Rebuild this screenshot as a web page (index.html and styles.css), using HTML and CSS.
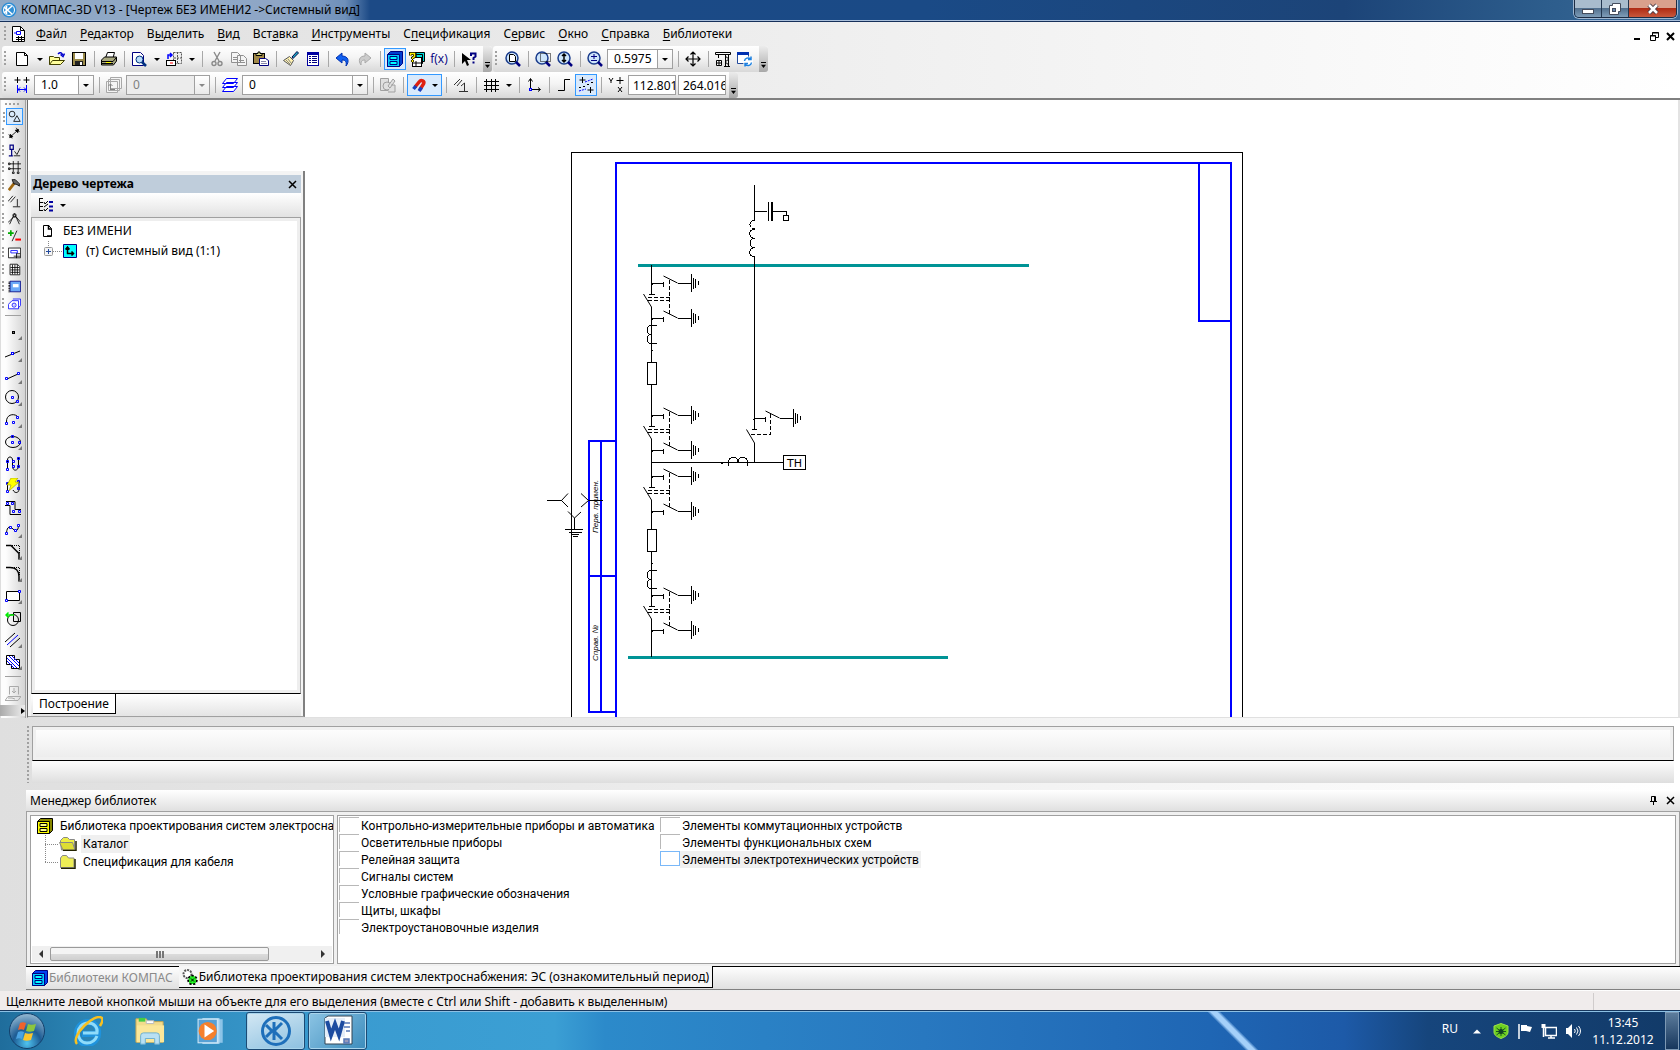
FILE: index.html
```html
<!DOCTYPE html>
<html lang="ru">
<head>
<meta charset="utf-8">
<title>КОМПАС-3D V13</title>
<link rel="stylesheet" href="styles.css">
</head>
<body>
<header class="titlebar">
  <svg class="applogo" viewBox="0 0 16 16"><circle cx="8" cy="8" r="7.500" fill="#2f8fd6"/><circle cx="8" cy="8" r="5.500" fill="none" stroke="#fff"/><path d="M5.500 4v8M11 4L6.500 8l4.500 4M3 5l3 3-3 3" stroke="#fff" stroke-width="1.500" fill="none"/></svg>
  <h1 class="caption">КОМПАС-3D V13 - [Чертеж БЕЗ ИМЕНИ2 -&gt;Системный вид]</h1>
  <div class="winbtns">
    <button class="wb" aria-label="Свернуть"><svg viewBox="0 0 12 12"><rect x=".5" y="6.500" width="11" height="4" fill="#fff" stroke="#444c5c"/></svg></button>
    <button class="wb" aria-label="Развернуть"><svg viewBox="0 0 12 12"><path d="M3.500 .5h8v8h-2v3h-9v-9h3z" fill="#fff" stroke="#444c5c"/><rect x="3.500" y="5.500" width="3" height="3" fill="#6a8ab0" stroke="#444c5c"/></svg></button>
    <button class="wb close" aria-label="Закрыть"><svg viewBox="0 0 12 12"><path d="M2 2l8 8M10 2l-8 8" stroke="#4a3a44" stroke-width="4.500"/><path d="M2 2l8 8M10 2l-8 8" stroke="#fff" stroke-width="2.500"/></svg></button>
  </div>
</header>

<div class="bars">
  <nav class="menubar">
    <i class="grip"></i>
    <svg class="docicon" viewBox="0 0 14 16"><path d="M1.500 .5h8l4 4v11h-12z" fill="#fff" stroke="#000"/><path d="M9.500 .5v4h4" fill="none" stroke="#000"/><path d="M3 7h2M5.500 5.500v3h4v-3z" stroke="#00f" fill="none"/><path d="M5 11.500h8M5 13.500h8M7.500 10v5M10.500 10v5" stroke="#000"/></svg>
    <a href="#"><u>Ф</u>айл</a><a href="#"><u>Р</u>едактор</a><a href="#">В<u>ы</u>делить</a><a href="#"><u>В</u>ид</a><a href="#">Вст<u>а</u>вка</a><a href="#"><u>И</u>нструменты</a><a href="#">С<u>п</u>ецификация</a><a href="#">С<u>е</u>рвис</a><a href="#"><u>О</u>кно</a><a href="#"><u>С</u>правка</a><a href="#"><u>Б</u>иблиотеки</a>
    <div class="mdi">
      <button aria-label="Свернуть окно"><svg viewBox="0 0 9 9"><path d="M0 7h6" stroke="#000" stroke-width="2"/></svg></button>
      <button aria-label="Восстановить окно"><svg viewBox="0 0 9 9"><path d="M2.500 3V.5h6v5H6M2 1h7M.5 3.500h5v5h-5zM0 4h6" fill="none" stroke="#000"/></svg></button>
      <button aria-label="Закрыть окно"><svg viewBox="0 0 9 9"><path d="M1 1l7 7M8 1L1 8" stroke="#000" stroke-width="2"/></svg></button>
    </div>
  </nav>

  <div class="barrow">
    <div class="toolbar">
      <i class="grip"></i>
      <button class="b" aria-label="Новый"><svg viewBox="0 0 16 16"><path d="M2.500 1.500h8l3 3v10h-11z" fill="#fff" stroke="#000"/><path d="M10.500 1.500v3h3" fill="none" stroke="#000"/></svg></button>
      <button class="dd" aria-label="Список"></button>
      <button class="b" aria-label="Открыть"><svg viewBox="0 0 16 16"><path d="M.5 13.500v-8h4l1 1h5v3M.5 13.500l3-4h12l-4 4z" fill="#ffff9c" stroke="#404000"/><path d="M9 3c2-2 4-1.500 4.500 1M11.500 3.500l2.500 2 1.500-3" fill="none" stroke="#00c" stroke-width="1.500"/></svg></button>
      <button class="b" aria-label="Сохранить"><svg viewBox="0 0 16 16"><rect x="1.500" y="1.500" width="13" height="13" fill="#9a8a4a" stroke="#000"/><rect x="4" y="2" width="8" height="6" fill="#fff"/><rect x="4" y="10" width="8" height="4" fill="#222"/><rect x="9" y="11" width="2" height="3" fill="#fff"/></svg></button>
      <i class="sep"></i>
      <button class="b" aria-label="Печать"><svg viewBox="0 0 16 16"><path d="M4.500 7l2-5.500h7L12 7" fill="#fff" stroke="#000"/><path d="M.5 9l3-3h12v4l-3 4h-12z" fill="#a8a880" stroke="#000"/><path d="M1 10.500h11l3-3.500M1 12.500h11" stroke="#000" fill="none"/><path d="M5 11.500h5" stroke="#ff0"/></svg></button>
      <i class="sep"></i>
      <button class="b" aria-label="Просмотр"><svg viewBox="0 0 16 16"><path d="M1.500 1.500h8l3 3v10h-11z" fill="#fff" stroke="#000080"/><circle cx="8.500" cy="8.500" r="3.500" fill="#b8dcf8" stroke="#003080"/><path d="M11 11l4 4" stroke="#003080" stroke-width="2.500"/></svg></button>
      <button class="dd" aria-label="Список"></button>
      <button class="b" aria-label="Вид"><svg viewBox="0 0 16 16"><path d="M7.500 1.500h8v11h-8zM11.500 1v12M8 7h7" fill="#eee" stroke="#555" stroke-dasharray="2 1"/><rect x=".5" y="9.500" width="9" height="5" fill="#fff" stroke="#000"/><path d="M4 12h3" stroke="#f00"/><path d="M2 8V4h3M4 2l2 2-2 2" stroke="#00f" stroke-width="1.500" fill="none"/></svg></button>
      <button class="dd" aria-label="Список"></button>
      <i class="sep"></i>
      <button class="b" aria-label="Вырезать"><svg viewBox="0 0 16 16" fill="none" stroke="#8a8a8a" stroke-width="1.400"><path d="M5 1l5 9M11 1L6 10"/><circle cx="5" cy="12.500" r="2"/><circle cx="11" cy="12.500" r="2"/></svg></button>
      <button class="b" aria-label="Копировать"><svg viewBox="0 0 16 16" fill="#f4f4f4" stroke="#909090"><path d="M.5 1.500h6l3 3v7h-9zM6.500 4.500h6l3 3v7h-9z"/><path d="M8 9.500h5M8 11.500h6M2 6.500h4M2 8.500h4"/></svg></button>
      <button class="b" aria-label="Вставить"><svg viewBox="0 0 16 16"><rect x=".5" y="2.500" width="11" height="10" fill="#a08848" stroke="#000"/><path d="M3 4.500h6v-2H7V1H5v1.500H3z" fill="#dd8" stroke="#000"/><path d="M6.500 7.500h6l3 2v5h-9z" fill="#fff" stroke="#000080"/><path d="M8 10.500h5M8 12.500h6" stroke="#88a"/></svg></button>
      <i class="sep"></i>
      <button class="b" aria-label="Копировать свойства"><svg viewBox="0 0 16 16"><path d="M9 6l5-5.500 1.500 1.500L10 7.500z" fill="#18b0c8" stroke="#004"/><path d="M6.500 5.500l4 4-3 5-7-5z" fill="#fff2b0" stroke="#555"/><path d="M3 9l4 4M5 8l3 4" stroke="#888"/></svg></button>
      <button class="b" aria-label="Свойства"><svg viewBox="0 0 16 16"><rect x="2" y="1" width="12" height="14" fill="#0000a0"/><rect x="3" y="4" width="10" height="10" fill="#fff"/><path d="M4 5.500h2M4 7.500h2M4 9.500h2M4 11.500h2M7 5.500h5M7 7.500h5M7 9.500h5M7 11.500h5" stroke="#000080"/></svg></button>
      <i class="sep"></i>
      <button class="b" aria-label="Отменить"><svg viewBox="0 0 16 16"><path d="M1 7l6-5v3c6 0 8 5 4 10 1-5-1-6-4-6v3z" fill="#1060f0" stroke="#0030b0"/></svg></button>
      <button class="b" aria-label="Повторить"><svg viewBox="0 0 16 16"><path d="M14 7L8 2v3C2 5 1 10 4 14c0-4 1-5 4-5v3z" fill="#ccc" stroke="#aaa"/></svg></button>
      <i class="sep"></i>
      <button class="b on" aria-label="Менеджер библиотек"><svg viewBox="0 0 16 16"><path d="M.5 3.500l3-3h12v12l-3 3h-12z" fill="#0040d0" stroke="#000080"/><path d="M.5 3.500h12v12h-12z" fill="#0cf" stroke="#000080"/><path d="M3 5.500h7v3H3zM3 10.500h7v3H3z" fill="#0ff" stroke="#000080"/></svg></button>
      <button class="b" aria-label="Справочник"><svg viewBox="0 0 16 16"><path d="M7 1.500h8.500v9h-8zM5 3.500h8.500v9H5z" fill="#0dd" stroke="#000"/><rect x="3.500" y="6.500" width="9" height="9" fill="#fff" stroke="#000"/><path d="M4 12h8M7 10v5" stroke="#000"/><path d="M1.500 4.500V2.500h4v3l-2 1.500v1M3.500 9v2" stroke="#000" stroke-width="3" fill="none"/><path d="M1.500 4.500V2.500h4v3l-2 1.500v1M3.500 9v2" stroke="#fe0" stroke-width="1.500" fill="none"/></svg></button>
      <button class="b fx">f(x)</button>
      <i class="sep"></i>
      <button class="b" aria-label="Справка"><svg viewBox="0 0 16 16"><path d="M1 2v11l3-3 2 5 2-1-2-5h4z" fill="#000"/><path d="M10 5V2.500h4.500v3L12.500 7v2M12.500 10.500v2" stroke="#000080" stroke-width="2" fill="none"/></svg></button>
      <button class="over" aria-label="Ещё"></button>
    </div>
    <div class="toolbar">
      <i class="grip"></i>
      <button class="b" aria-label="Лист"><svg viewBox="0 0 16 16"><circle cx="7" cy="7" r="6" fill="#cfe6fb" stroke="#1a3c8c" stroke-width="1.500"/><path d="M11 11l4 4" stroke="#000080" stroke-width="2.500"/><path d="M4.500 3.500h4l2 2v5h-6z" fill="#fff" stroke="#000"/></svg></button>
      <i class="sep"></i>
      <button class="b" aria-label="Рамка"><svg viewBox="0 0 16 16"><circle cx="7" cy="7" r="6" fill="#cfe6fb" stroke="#1a3c8c" stroke-width="1.500"/><path d="M11 11l4 4" stroke="#000080" stroke-width="2.500"/><path d="M5.500 2.500h10v8h-10z" fill="none" stroke="#000" stroke-dasharray="1 1"/></svg></button>
      <button class="b" aria-label="Масштаб"><svg viewBox="0 0 16 16"><circle cx="7" cy="7" r="6" fill="#cfe6fb" stroke="#1a3c8c" stroke-width="1.500"/><path d="M11 11l4 4" stroke="#000080" stroke-width="2.500"/><path d="M7 3v8M5 5l2-2 2 2M5 9l2 2 2-2" fill="none" stroke="#000" stroke-width="1.500"/></svg></button>
      <i class="sep"></i>
      <button class="b" aria-label="Крупнее"><svg viewBox="0 0 16 16"><circle cx="7" cy="7" r="6" fill="#cfe6fb" stroke="#1a3c8c" stroke-width="1.500"/><path d="M11 11l4 4" stroke="#000080" stroke-width="2.500"/><path d="M7 3v5M4 5.500h6M4 9.500h6" stroke="#000080"/></svg></button>
      <div class="combo zoomc"><input aria-label="Текущий масштаб" value="0.5975"><button class="dd" aria-label="Список"></button></div>
      <i class="sep"></i>
      <button class="b" aria-label="Сдвинуть"><svg viewBox="0 0 16 16"><path d="M8 1v14M1 8h14M5.500 3.500L8 1l2.500 2.500M5.500 12.500L8 15l2.500-2.500M3.500 5.500L1 8l2.500 2.500M12.500 5.500L15 8l-2.500 2.500" fill="none" stroke="#000" stroke-width="1.200"/></svg></button>
      <i class="sep"></i>
      <button class="b" aria-label="Перестроить"><svg viewBox="0 0 16 16"><path d="M.5 1.500h15v2H.5zM3.500 4v3" fill="none" stroke="#000"/><path d="M1.500 9.500h5v5h-5zM4 9v6M1 12h6" fill="#fff" stroke="#000"/><path d="M10.500 3v12M13.500 3v12M10 5l4 3-4 3 4 3M9 15.500h6" fill="none" stroke="#000"/></svg></button>
      <button class="b" aria-label="Обновить"><svg viewBox="0 0 16 16"><path d="M.5 1.500h11v11H.5z" fill="#fff" stroke="#224a9c"/><path d="M0 2.500h12" stroke="#0030b0" stroke-width="3"/><circle cx="11" cy="10.500" r="5" fill="#fff"/><path d="M7.500 10a3.500 3.500 0 0 1 6-2M14.500 11.500a3.500 3.500 0 0 1-6 2M14 5.500v3h-3M8 15.500v-3h3" fill="none" stroke="#1c80e0" stroke-width="1.500"/></svg></button>
      <button class="over" aria-label="Ещё"></button>
    </div>
  </div>

  <div class="barrow">
    <div class="toolbar">
      <i class="grip"></i>
      <button class="b" aria-label="Шаг курсора"><svg viewBox="0 0 16 16"><path d="M3.500 0v6M.5 3h6M12.500 0v6M9.500 3h6" stroke="#000"/><path d="M3.500 8v8M12.500 8v8M4 12.500h8M6 10.500l-2 2 2 2M10 10.500l2 2-2 2" fill="none" stroke="#00f"/></svg></button>
      <div class="combo step"><input aria-label="Текущий шаг курсора" value="1.0"><button class="dd" aria-label="Список"></button></div>
      <i class="sep"></i>
      <button class="b" aria-label="Состояния видов"><svg viewBox="0 0 16 16" fill="#f4f4f4" stroke="#a8a8a8"><path d="M4.500 .5h11v11h-11zM2.500 2.500h11v11h-11zM.5 4.500h11v11H.5z"/><path d="M4.500 13V7M2.500 9l2-2 2 2M4 12.500h5" stroke="#808080" fill="none"/></svg></button>
      <div class="combo view off"><input aria-label="Текущий вид" value="0" disabled><button class="dd" aria-label="Список" disabled></button></div>
      <i class="sep"></i>
      <button class="b" aria-label="Слои"><svg viewBox="0 0 16 16" fill="#fff" stroke="#00f"><path d="M.5 14.500l4-5h11l-4 5zM.5 10.500l4-5h11l-4 5zM.5 6.500l4-5h11l-4 5z"/></svg></button>
      <div class="combo layer"><input aria-label="Текущий слой" value="0"><button class="dd" aria-label="Список"></button></div>
      <i class="sep"></i>
      <button class="b" aria-label="Редактор"><svg viewBox="0 0 16 16" fill="#e0e0e0" stroke="#a0a0a0"><path d="M.5 1.500h8v12h-8z"/><circle cx="7" cy="9" r="4"/><path d="M8 9l5-7 2 2-5 7zM11 8h4v7H8"/></svg></button>
      <i class="sep"></i>
      <button class="b on magnet" aria-label="Привязки"><svg viewBox="0 0 16 16"><path d="M4 10l4.500-5.500c1.500-2 5.500-.5 4 2.500L9 12.500" fill="none" stroke="#e02010" stroke-width="3.500"/><path d="M2.500 12L5 9M8 14l2.500-3.500" fill="none" stroke="#1840c0" stroke-width="3.500"/></svg><span class="tri"></span></button>
      <i class="sep"></i>
      <button class="b" aria-label="Запретить привязки"><svg viewBox="0 0 16 16" fill="none" stroke="#000"><path d="M1 8l6-6M4 9l5-6M6 14.500h9M11.500 14V6L8 9" stroke-width=".8"/></svg></button>
      <i class="sep"></i>
      <button class="b" aria-label="Сетка"><svg viewBox="0 0 16 16" stroke="#000" shape-rendering="crispEdges"><path d="M3.500 2v13M8.500 2v13M12.500 2v13M1 4.500h15M1 8.500h15M1 12.500h15"/></svg></button>
      <button class="dd" aria-label="Список"></button>
      <i class="sep"></i>
      <button class="b" aria-label="Система координат"><svg viewBox="0 0 16 16" stroke="#000" fill="none"><path d="M4.500 11V2M2.500 4.500l2-3 2 3M6 12.500h8M12 10.500l2.500 2-2.500 2"/><rect x="3.500" y="11.500" width="2" height="2" stroke="#00f"/></svg></button>
      <i class="sep"></i>
      <button class="b" aria-label="Ортогонально"><svg viewBox="0 0 16 16"><path d="M2 13.500h6.500v-11H14" stroke="#000" fill="none"/></svg></button>
      <button class="b on" aria-label="Округление"><svg viewBox="0 0 16 16"><path d="M4.500 0v6M1.500 3h6M12.500 10v6M9.500 13h6M1 10.500h2M5 9.500h2M9 7.500h2M13 5.500h2" stroke="#000"/><path d="M7 5l8-3M1 14l7-2" stroke="#00f" stroke-dasharray="2 1"/></svg></button>
      <i class="sep"></i>
      <button class="b yx" aria-label="Координаты"><svg viewBox="0 0 16 16" stroke="#000" fill="none"><path d="M1 1l2 3 2-3M3 4v2M12 0v7M8.500 3.500h7M10 10l4 5M14 10l-4 5"/></svg></button>
      <input class="coord" aria-label="Координата X" value="112.8012">
      <input class="coord" aria-label="Координата Y" value="264.0165">
      <button class="over" aria-label="Ещё"></button>
    </div>
  </div>
</div>

<main class="work">
  <aside class="side">
    <i class="gripx"></i>
    <div class="panels">
      <button class="on" aria-label="Геометрия"><svg viewBox="0 0 16 16" fill="none" stroke="#000"><circle cx="5" cy="5" r="3.500"/><path d="M11 7l4 7H7z"/></svg></button>
      <button aria-label="Размеры"><svg viewBox="0 0 16 16" stroke="#000" fill="#000"><path d="M3 12l9-8M1 9l4 5M10 1l4 5M2 13l1-4 3 3zM13 3l-1 4-3-3z"/></svg></button>
      <button aria-label="Обозначения"><svg viewBox="0 0 16 16" fill="none"><path d="M2.500 1.500h4v5h-4zM4.500 7v7M1 14.500h5" stroke="#000080" stroke-width="1.500"/><path d="M7 14.500h8M8 9l3 4 4-8" stroke="#000"/></svg></button>
      <button aria-label="Обозначения для строительства"><svg viewBox="0 0 16 16" stroke="#000" fill="none"><path d="M2 3.500h14M2 9.500h14M6.500 0v13M12.500 0v13M.5 2.500h2v2h-2zM.5 8.500h2v2h-2zM5.500 13.500h2v2h-2zM11.500 13.500h2v2h-2z"/></svg></button>
      <button aria-label="Редактирование"><svg viewBox="0 0 16 16"><path d="M1 15l7-9" stroke="#a06810" stroke-width="3.500"/><path d="M5 2h4l5 5v3l-3-2-4-1z" fill="#666" stroke="#000"/></svg></button>
      <button aria-label="Параметризация"><svg viewBox="0 0 16 16" stroke="#000"><path d="M0 8l6-7M3 9l6-7M6 14.500h9M11.500 14V5"/></svg></button>
      <button aria-label="Измерения"><svg viewBox="0 0 16 16" stroke="#000" fill="none"><path d="M2 15L8 2l6 13M0 13l7-7h3l5 6"/><circle cx="8" cy="4" r="2"/></svg></button>
      <button aria-label="Выделение"><svg viewBox="0 0 16 16"><path d="M0 5h7M3.500 1.500v7" stroke="#0a0" stroke-width="2"/><path d="M5 15l6-13" stroke="#000"/><path d="M9 13h7" stroke="#f00" stroke-width="2.500"/></svg></button>
      <button aria-label="Виды"><svg viewBox="0 0 16 16" fill="#fff" stroke="#000"><path d="M.5 2.500h15v12H.5zM10 9.500h5M7 12.500h8M10.500 9v6"/><path d="M3.500 5.500h8v3h-8z" stroke="#00f"/></svg></button>
      <button aria-label="Спецификация"><svg viewBox="0 0 16 16" fill="#fff" stroke="#000"><path d="M2.500 1.500h9l3 3v10h-12zM3 5.500h11M3 8.500h11M3 11.500h11M5.500 2v12M8.500 2v12M11.500 2v12"/></svg></button>
      <button aria-label="Отчеты"><svg viewBox="0 0 16 16"><path d="M2.500 1.500h13v13h-13z" fill="#6aa8f8" stroke="#000080"/><path d="M1.500 2v13" stroke="#000" stroke-dasharray="1 1" stroke-width="2"/><path d="M6 5h7v4H6z" fill="#fff"/></svg></button>
      <button aria-label="Вставки"><svg viewBox="0 0 16 16" fill="#fff" stroke="#00f"><path d="M6 2.500h9.500v8L13 13M5 4.500h8v10H.5V9z"/><circle cx="7.500" cy="10" r="2.500"/><path d="M7 10h1"/></svg></button>
    </div>
    <i class="hsep"></i>
    <div class="tools">
      <button aria-label="Точка"><svg viewBox="0 0 16 16"><rect x="7.500" y="7.500" width="2" height="2" fill="#777" stroke="#000"/></svg></button>
      <button aria-label="Вспомогательная прямая"><svg viewBox="0 0 16 16"><path d="M0 11L15 5" stroke="#000"/><rect x="6.500" y="6.500" width="2" height="2" fill="#fff" stroke="#00f"/></svg></button>
      <button aria-label="Отрезок"><svg viewBox="0 0 16 16" fill="#fff"><path d="M2 11l11-5" stroke="#000"/><path d="M.5 9.500h2v2h-2zM12.500 4.500h2v2h-2z" stroke="#00f"/></svg></button>
      <button aria-label="Окружность"><svg viewBox="0 0 16 16" fill="none"><circle cx="7" cy="7" r="6.500" stroke="#000"/><path d="M6.500 6.500h2v2h-2zM11.500 10.500h2v2h-2z" stroke="#00f"/></svg></button>
      <button aria-label="Дуга"><svg viewBox="0 0 16 16" fill="#fff"><path d="M1.500 10C1 3 8 1 12 4" stroke="#000" fill="none"/><path d="M.5 10.500h2v2h-2zM7.500 9.500h2v2h-2zM11.500 4.500h2v2h-2z" stroke="#00f"/></svg></button>
      <button aria-label="Эллипс"><svg viewBox="0 0 16 16" fill="none"><ellipse cx="8" cy="8" rx="7.500" ry="5.500" stroke="#000"/><path d="M6.500 7.500h2v2h-2zM6.500 1.500h2v2h-2zM13.500 7.500h2v2h-2z" stroke="#00f"/></svg></button>
      <button class="nc" aria-label="Непрерывный ввод"><svg viewBox="0 0 16 16" fill="none"><path d="M2.500 13V4c0-4 5-4 5 0v6c0 6 6 5 6 0V2" stroke="#000"/><path d="M1.500 4.500h2v2h-2zM1.500 12.500h2v2h-2zM7.500 4.500h2v2h-2zM7.500 9.500h2v2h-2zM12.500 1.500h2v2h-2zM12.500 9.500h2v2h-2z" stroke="#00f"/></svg></button>
      <button class="nc" aria-label="Линия"><svg viewBox="0 0 16 16" fill="none"><path d="M2.500 13V5M8 12c2 4 6 3 6-1V3" stroke="#000"/><path d="M1.500 4.500h2v2h-2zM1.500 12.500h2v2h-2zM12.500 2.500h2v2h-2zM12.500 9.500h2v2h-2z" stroke="#00f"/><path d="M6 0h7l-3 4h4L4 13l2-6H2z" fill="#ff0" stroke="#990" stroke-width=".6"/></svg></button>
      <button class="nc" aria-label="Мультилиния"><svg viewBox="0 0 16 16" fill="none"><path d="M1 1.500h9v8h6M0 5.500h5v9h11" stroke="#000"/><path d="M1.500 2.500h2v2h-2zM6.500 2.500h2v2h-2zM7.500 10.500h2v2h-2zM13.500 10.500h2v2h-2z" stroke="#00f"/></svg></button>
      <button aria-label="Кривая"><svg viewBox="0 0 16 16" fill="#fff"><path d="M1.500 11C2 4 5 4 8 7s5 2 5.500-3" stroke="#000" fill="none"/><path d="M.5 10.500h2v2h-2zM4.500 4.500h2v2h-2zM9.500 7.500h2v2h-2zM12.500 2.500h2v2h-2z" stroke="#00f"/></svg></button>
      <button aria-label="Фаска"><svg viewBox="0 0 16 16" fill="none" stroke="#000"><path d="M1 1.500h5l8 8v6" stroke-width="1.500"/><path d="M7 1.500h7.500V9" stroke-dasharray="1 1"/></svg></button>
      <button aria-label="Скругление"><svg viewBox="0 0 16 16" fill="none" stroke="#000"><path d="M1 1.500h4c6 0 9 4 9 9v5" stroke-width="1.500"/><path d="M7 1.500h7.500V9" stroke-dasharray="1 1"/></svg></button>
      <button aria-label="Прямоугольник"><svg viewBox="0 0 16 16" fill="#fff"><path d="M1.500 3.500h13v9h-13z" stroke="#000"/><path d="M.5 11.500h2v2h-2zM13.500 2.500h2v2h-2z" stroke="#00f"/></svg></button>
      <button class="nc" aria-label="Собрать контур"><svg viewBox="0 0 16 16" fill="none"><circle cx="8" cy="10" r="5.500" stroke="#000"/><path d="M8.500 2.500h7v9h-7z" stroke="#000"/><path d="M1 5h8M3.500 2.500L1 5l2.500 2.500" stroke="#0e0" stroke-width="1.500"/></svg></button>
      <button aria-label="Эквидистанта"><svg viewBox="0 0 16 16" stroke="#000"><path d="M0 10L10 1M5 15l10-9"/><path d="M2 13L13 3" stroke="#00f"/></svg></button>
      <button aria-label="Штриховка"><svg viewBox="0 0 16 16"><path d="M1.500 1.500h8v4h5v9h-8v-4h-5z" fill="#fff" stroke="#000"/><path d="M2 4l10 10M2 7l7 7M4 2l10 10M7 2l7 7" stroke="#00f"/></svg></button>
    </div>
    <i class="hsep"></i>
    <div class="tools"><button class="nc" aria-label="Проекция"><svg viewBox="0 0 16 16" fill="none" stroke="#aaa"><path d="M4.500 1.500h9v8M4.500 1.500v8M9 3v5M7 6l2 2 2-2M3 11.500h13l-3 4H0zM3 13h4l3 1"/></svg></button></div>
    <button class="sideover" aria-label="Ещё"></button>
  </aside>

  <section class="canvas">
    <svg class="drawing" viewBox="28 100 1300 617" width="1300" height="617">
      <defs>
        <g id="earth"><path d="M0 0H12M12 -2V3M26 0H40M-1 1H1"/><path d="M12 -7.500L26 -.5" shape-rendering="auto"/><path d="M40 -9.500V8.500M42 -5.500V5.500M44 -4.500V4.500M47 -2.500V1.500"/></g>
        <g id="unit"><use href="#earth"/><use href="#earth" y="35"/><path d="M-3 11H3"/><path d="M-8 10.500L0 23.500" shape-rendering="auto"/><path d="M-4 14H18M-4 17H18M18 -4V30" stroke-dasharray="4 2"/></g>
        <path id="coil" d="M5 0H0a4.500 4.500 0 0 0 0 9a4.500 4.500 0 0 0 0 9H5"/>
      </defs>
      <g fill="none" stroke="#000" shape-rendering="crispEdges">
        <path d="M571.500 720V152.500H1242.500V720"/>
        <g stroke="#00f" stroke-width="2"><path d="M616 720V163H1231V720M1199 163V321H1231M616 441H589V712H616M601 441V712M589 576H616"/></g>
        <g stroke="#009496" stroke-width="3"><path d="M638 265.500H1029M628 657.500H948"/></g>
        <path d="M651.500 265V294M651.500 307V362M651.500 385V426M651.500 439V487M651.500 500V529M651.500 552V606M651.500 619V657"/>
        <use href="#unit" x="651.500" y="283.500"/><use href="#unit" x="651.500" y="415.500"/><use href="#unit" x="651.500" y="476.500"/><use href="#unit" x="651.500" y="595.500"/>
        <rect x="647.500" y="362.500" width="9" height="22"/><rect x="647.500" y="529.500" width="9" height="22"/>
        <use href="#coil" x="651.500" y="325.500"/><use href="#coil" x="651.500" y="570.500"/>
        <path d="M652 350.500h1M652 563.500h1M721 463.500h2"/>
        <path d="M754.500 185V220a4.500 4.500 0 0 0 0 9a4.500 4.500 0 0 0 0 9.500a4.500 4.500 0 0 0 0 9a4.500 4.500 0 0 0 0 9.500V429M754.500 443V463M752 429.500H757"/>
        <path d="M746.500 429.500L754.500 443" shape-rendering="auto"/>
        <path d="M751 434.500H770.500V414" stroke-dasharray="4 2"/>
        <use href="#earth" x="753.500" y="418.500"/>
        <path d="M754.500 211.500H767M768.500 202V221M773 211.500H786.500V215M783.500 215.500h5v5h-5z"/><path d="M772 202V221" stroke-width="2"/>
        <path d="M651.500 462.500H783.500M728.500 466V462a4.500 4.500 0 0 1 9.500 0a4.500 4.500 0 0 1 9.500 0V466M783.500 455.500h22v14h-22z"/>
        <path d="M547 500.500H561.500M603 500.500H588.500M574.500 518V529M565 529.500H583M569 532.500H582M571 534.500H579M573 536.500H578"/>
        <path d="M568 493.500L561.500 500.500L568 507M581 493.500L588.500 500.500L581 507M568 511.500L574.500 518L581 512" shape-rendering="auto"/>
      </g>
      <text class="tn" x="787" y="467">ТН</text>
      <text class="stamp" transform="translate(598 533) rotate(-90)">Перв. примен.</text>
      <text class="stamp" transform="translate(598 661) rotate(-90)">Справ. №</text>
    </svg>

    <div class="treepanel">
      <div class="treehead"><h2>Дерево чертежа</h2><button aria-label="Закрыть"><svg viewBox="0 0 9 9"><path d="M1 1l7 7M8 1L1 8" stroke="#000" stroke-width="1.500"/></svg></button></div>
      <div class="treetools"><svg viewBox="0 0 16 16"><path d="M1.500 1v13M1 1.500h4M1 5.500h4M1 9.500h4M1 13.500h4" stroke="#000"/><path d="M6 5l1 2 3-3M6 12l1 2 3-3M6 10l4-3" stroke="#000" fill="none"/><path d="M11 5h4M11 9.500h4M11 13.500h4" stroke="#0000a0" stroke-width="2"/></svg><button class="dd" aria-label="Режим"></button></div>
      <ul class="tree">
        <li><svg class="ti" viewBox="0 0 14 14"><path d="M3.500 1.500h5l3 3v8h-8z" fill="#fff" stroke="#000"/><path d="M8.500 1v4h3M7 12h4" stroke="#000" fill="none" stroke-width="1.500"/></svg><span>БЕЗ ИМЕНИ</span></li>
        <li class="child"><svg class="plus" viewBox="0 0 20 20"><path d="M5.500 0v6M10 10.500h10" stroke="#888" stroke-dasharray="1 1"/><rect x="1.500" y="6.500" width="8" height="8" rx="1" fill="#f4f4f4" stroke="#999"/><path d="M3 10.500h5M5.500 8v5" stroke="#224a9c"/></svg><svg class="ti" viewBox="0 0 14 14"><path d="M.5 .5h13v13H.5z" fill="#0ff" stroke="#000080"/><path d="M4.500 10V3M2.500 5.500l2-2.500 2 2.500M4 9.500h6M8.500 7.500l2 2-2 2" stroke="#000" fill="none" stroke-width="1.500"/></svg><span>(т) Системный вид (1:1)</span></li>
      </ul>
      <div class="treetabs"><button>Построение</button></div>
    </div>
  </section>
</main>

<section class="props"><i class="gripy"></i><div class="propbox"><div class="proptop"></div><div class="propbot"></div></div></section>

<section class="library">
  <div class="libhead"><h2>Менеджер библиотек</h2>
    <button aria-label="Закрепить"><svg viewBox="0 0 9 9"><path d="M2.500 5V.5h4V5M1 5.500h7M4.500 6v3M5.500 1v4" stroke="#000" fill="none"/></svg></button>
    <button aria-label="Закрыть"><svg viewBox="0 0 9 9"><path d="M1 1l7 7M8 1L1 8" stroke="#000" stroke-width="1.500"/></svg></button>
  </div>
  <div class="libbody">
    <div class="libtree">
      <ul>
        <li><svg class="li0" viewBox="0 0 16 16"><path d="M.5 3.500l3-3h12v12l-3 3h-12z" fill="#880" stroke="#000"/><path d="M.5 3.500h12v12h-12z" fill="#ff0" stroke="#000"/><path d="M3 5.500h7v3H3zM3 10.500h7v3H3z" fill="#ff8" stroke="#000"/></svg><span>Библиотека проектирования систем электроснаб</span></li>
        <li class="sub"><svg class="join" viewBox="0 0 14 18"><path d="M.5 0v18M0 9.500h14" stroke="#888" stroke-dasharray="1 1"/></svg><svg class="fold" viewBox="0 0 18 14"><path d="M1.500 6V3.500l3-3h4l2 2h5V13h-13z" fill="#ee4" stroke="#888"/><path d="M.5 5.500h13l2.500 7.500H4z" fill="#dd3" stroke="#888"/><path d="M4 13.500h13V4" stroke="#220" fill="none" stroke-width="1.500"/></svg><span class="sel">Каталог</span></li>
        <li class="sub"><svg class="join" viewBox="0 0 14 18"><path d="M.5 0v9M0 9.500h14" stroke="#888" stroke-dasharray="1 1"/></svg><svg class="fold" viewBox="0 0 18 14"><path d="M1.500 12.500V3l2-2.500h4l2 2.500h5.500v9.500z" fill="#ee5" stroke="#888"/><path d="M2 13.500h14V4" stroke="#220" fill="none" stroke-width="1.500"/></svg><span>Спецификация для кабеля</span></li>
      </ul>
      <div class="hscroll"><button class="sl" aria-label="Влево"></button><div class="track"><div class="thumb"><i></i><i></i><i></i></div></div><button class="sr" aria-label="Вправо"></button></div>
    </div>
    <ul class="liblist">
      <li><i></i><span>Контрольно-измерительные приборы и автоматика</span></li>
      <li><i></i><span>Осветительные приборы</span></li>
      <li><i></i><span>Релейная защита</span></li>
      <li><i></i><span>Сигналы систем</span></li>
      <li><i></i><span>Условные графические обозначения</span></li>
      <li><i></i><span>Щиты, шкафы</span></li>
      <li><i></i><span>Электроустановочные изделия</span></li>
      <li><i></i><span>Элементы коммутационных устройств</span></li>
      <li><i></i><span>Элементы функциональных схем</span></li>
      <li class="cur"><i></i><span>Элементы электротехнических устройств</span></li>
    </ul>
  </div>
  <div class="libtabs">
    <button class="tab dim"><svg viewBox="0 0 16 16"><path d="M.5 3.500l3-3h12v12l-3 3h-12z" fill="#0040f0" stroke="#000080"/><path d="M.5 3.500h12v12h-12z" fill="#0cf" stroke="#000080"/><path d="M3 5.500h7v3H3zM3 10.500h7v3H3z" fill="#0ff" stroke="#000080"/></svg>Библиотеки КОМПАС</button>
    <button class="tab act"><svg viewBox="0 0 16 16"><circle cx="5.500" cy="5" r="4" fill="#fff" stroke="#555" stroke-width="2" stroke-dasharray="2 1"/><circle cx="10.500" cy="11" r="4" fill="#0e0" stroke="#000" stroke-width="2.500" stroke-dasharray="2 1.500"/><circle cx="10.500" cy="11" r="3.500" fill="#2e2"/><path d="M9 9.500l3 3M12 9.500l-3 3" stroke="#000"/></svg>Библиотека проектирования систем электроснабжения: ЭС (ознакомительный период)</button>
    <span class="rest"></span>
  </div>
</section>

<footer class="status"><span>Щелкните левой кнопкой мыши на объекте для его выделения (вместе с Ctrl или Shift - добавить к выделенным)</span><i></i></footer>

<div class="taskbar">
  <button class="orb" aria-label="Пуск"><svg viewBox="0 0 38 38"><defs><radialGradient id="og" cx=".5" cy=".85" r=".8"><stop offset="0" stop-color="#4fc4f0"/><stop offset=".5" stop-color="#1d5c94"/><stop offset="1" stop-color="#8ab0cc"/></radialGradient></defs><circle cx="19" cy="19" r="17.500" fill="url(#og)" stroke="#12406c"/><path d="M12 11c2-1 4-1 6 0l-2 7c-2-1-4-1-6 0z" fill="#f0622c"/><path d="M20 12c2 1 5 1 8 0l-2 7c-3 1-6 1-8 0z" fill="#8cc63e"/><path d="M10 20c2-1 4-1 6 0l-2 7c-2-1-4-1-6 0z" fill="#4ba3e2"/><path d="M17 21c2 1 5 1 8 0l-2 7c-3 1-6 1-8 0z" fill="#fcc62c"/></svg></button>
  <button class="pin" aria-label="Internet Explorer"><svg viewBox="0 0 30 30"><path d="M25 20c-2 5-6 8-11 8C8 28 4 23 4 17S9 6 15 6s11 5 10 12H9" fill="none" stroke="#1f93dd" stroke-width="6"/><path d="M24 20c-2 5-6 7-10 7-6 0-9-5-9-10S9 7 15 7s10 4 9 10H10" fill="none" stroke="#8fdcfa" stroke-width="3"/><path d="M4 28C-3 20 22-4 29 2c1 2 0 5-2 8" fill="none" stroke="#f8c020" stroke-width="2.500"/></svg></button>
  <button class="pin" aria-label="Проводник"><svg viewBox="0 0 32 30"><path d="M1 2h11l2 3h16v22H1z" fill="#f2dc8c" stroke="#c8a850"/><path d="M4 1h7v4H4z" fill="#4c4"/><path d="M12 4h8v3h-8z" fill="#fff" stroke="#bbb"/><path d="M2 9h29v18H2z" fill="#fbe79a"/><path d="M6 29V20q0-3 3-3h14q3 0 3 3v9h-5v-6H11v6z" fill="#b8e0f4" stroke="#6aaed0"/></svg></button>
  <button class="pin" aria-label="Проигрыватель"><svg viewBox="0 0 28 26"><rect x="9" y="2" width="15" height="22" fill="#8cc4e8"/><rect x="5" y="1" width="16" height="24" fill="#b4daf2"/><rect x="1" y="2" width="18" height="22" fill="#58a0d4" stroke="#cfe8f8"/><circle cx="10" cy="13" r="8.500" fill="#f5802c"/><path d="M7 7l9 6-9 6z" fill="#fff"/></svg></button>
  <button class="task cur" aria-label="КОМПАС"><svg viewBox="0 0 32 32"><circle cx="16" cy="16" r="13.500" fill="none" stroke="#1e6fba" stroke-width="3"/><path d="M14 7v18M22 8l-8 8 8 8M6 10l6 6-6 6" fill="none" stroke="#1e6fba" stroke-width="3"/></svg></button>
  <button class="task" aria-label="Word"><svg viewBox="0 0 32 32"><path d="M3 3l3-2h24v28H3z" fill="#fff" stroke="#345"/><path d="M3 3h20v19H3z" fill="#e4edf8"/><path d="M5 6l4 14 4-11 4 11 4-14" fill="none" stroke="#1c4ba0" stroke-width="4"/><path d="M22 24h5v4h-5zM22 8h6M22 12h6M24 16h4" fill="#99b" stroke="#5578b8" stroke-width="1.500"/></svg></button>
  <div class="tray">
    <span class="lang">RU</span>
    <button aria-label="Показать скрытые"><svg viewBox="0 0 16 16"><path d="M4 10.500l4-4 4 4z" fill="#fff"/></svg></button>
    <button aria-label="Dr.Web"><svg viewBox="0 0 16 16"><path d="M8 .5l7 2.500v6c0 3-3 5-7 6.500C4 14 1 12 1 9V3z" fill="#6cd020" stroke="#9ee04c"/><circle cx="8" cy="8.500" r="2.500" fill="#142"/><path d="M3.500 5l9 7M12.500 5l-9 7M3 8.500h10M8 4v9" stroke="#142" stroke-width=".9"/></svg></button>
    <button aria-label="Центр поддержки"><svg viewBox="0 0 16 16"><path d="M2 1v15" stroke="#fff" stroke-width="1.500"/><path d="M4 2h6v1l5 1-2 5-4-1H4z" fill="#fff"/></svg></button>
    <button aria-label="Сеть"><svg viewBox="0 0 16 16"><path d="M4.500 4.500h11v8h-11zM7 15h7M10 13v2M2.500 5v9" fill="none" stroke="#fff" stroke-width="1.500"/><path d="M.5 1h4v4h-4z" fill="#fff"/></svg></button>
    <button aria-label="Громкость"><svg viewBox="0 0 16 16"><path d="M1 5h2l4-4v14l-4-4H1z" fill="#fff"/><path d="M9.500 6q1.500 2 0 4M11.500 4.500q3 3.500 0 7M13.500 3q4 5 0 10" fill="none" stroke="#fff"/></svg></button>
  </div>
  <div class="clock"><time>13:45</time><time>11.12.2012</time></div>
  <button class="peek" aria-label="Свернуть все окна"></button>
</div>
</body>
</html>
```
FILE: styles.css
```css
* { box-sizing: border-box; }
html, body { margin: 0; }
body {
  min-height: 100vh;
  display: flex;
  flex-direction: column;
  font: 12px/16px "Noto Sans", "Open Sans", sans-serif;
  color: #000;
  background: linear-gradient(90deg, #dfdfdf, #fff);
  overflow-x: hidden;
}
button, input { font: inherit; color: inherit; padding: 0; margin: 0; border: 0; background: none; border-radius: 0; }
button { display: flex; align-items: center; justify-content: center; }
ul { list-style: none; margin: 0; padding: 0; }
h1, h2 { margin: 0; font-size: 12px; font-weight: normal; }
svg { display: block; flex: none; }

/* title bar */
.titlebar {
  height: 22px;
  display: flex;
  align-items: flex-start;
  border-bottom: 1px solid #16305a;
  background: linear-gradient(90deg, #8fa9c6 0, #8ea6c6 280px, #6f90ba 345px, #1c4a86 370px, #1a4a86 55%, #1c4478 80%, #2d5d8c 92%, #3a6a98 100%);
  box-shadow: inset 0 -1px #a9bfdb;
}
.applogo { width: 16px; height: 16px; margin: 2px 0 0 1px; }
.caption { margin-left: 4px; line-height: 20px; flex: 1; white-space: nowrap; }
.winbtns { display: flex; height: 18px; margin-right: 3px; border: 1px solid #1c2c44; border-top: 0; border-radius: 0 0 5px 5px; box-shadow: 0 0 0 1px #9fb6d0; overflow: hidden; }
.wb { width: 27px; height: 17px; border-right: 1px solid #22364f; background: linear-gradient(#a9bccd 0 45%, #52708e 50%, #7f9db8); }
.wb svg { width: 12px; height: 12px; }
.close { width: 47px; border-right: 0; background: linear-gradient(#d9a08c 0 45%, #b02c14 50%, #c8583c); }

/* menu and toolbars */
.bars { border-bottom: 2px solid #808080; }
.menubar { display: flex; align-items: center; height: 24px; padding: 0 0 1px 4px; }
.menubar a { color: #000; text-decoration: none; margin-right: 13px; }
.menubar u { text-underline-offset: 2px; }
.grip { flex: none; width: 2px; height: 16px; margin-right: 5px; background: repeating-linear-gradient(#a0a0a0 0 2px, transparent 2px 4px); }
.docicon { width: 14px; height: 16px; margin-right: 11px; }
.mdi { margin-left: auto; display: flex; gap: 7px; padding: 5px 5px 0 0; }
.mdi svg { width: 9px; height: 9px; }
.barrow { display: flex; gap: 1px; padding-left: 2px; }
.toolbar {
  display: flex;
  align-items: center;
  height: 26px;
  padding-left: 2px;
  border-radius: 3px;
  background: linear-gradient(#fff, #f4f4f4 45%, #d8d8d8);
}
.toolbar svg { width: 16px; height: 16px; }
.b { flex: none; width: 22px; height: 22px; }
.on { border: 1px solid #3399ff; background: #d9eafc; }
.fx { font: 12px/16px "Open Sans", sans-serif; color: #000080; }
.dd { flex: none; width: 13px; height: 20px; }
.dd::after, .tri { content: ""; border: 3px solid transparent; border-top-color: #000; border-bottom: 0; }
.sep { flex: none; width: 8px; height: 16px; background: linear-gradient(#a8a8a8, #a8a8a8) 4px 0 / 1px 100% no-repeat; }
.over { align-self: stretch; width: 9px; margin-left: 3px; align-items: flex-end; padding-bottom: 4px; border-radius: 0 3px 3px 0; background: linear-gradient(#ececec, #a8a8a8); }
.over::after { content: ""; width: 5px; height: 6px; background: #000; clip-path: polygon(0 0, 100% 0, 100% 17%, 0 17%, 0 45%, 100% 45%, 50% 100%, 0 45%); }
.combo { flex: none; display: flex; height: 20px; margin: 0 1px; border: 1px solid #a0a0a0; background: #fff; }
.combo input { flex: 1; width: 0; padding-left: 6px; }
.combo .dd { width: 15px; height: 18px; border-left: 1px solid #a0a0a0; background: linear-gradient(#fff, #eaeaea); }
.zoomc { width: 66px; }
.step { width: 60px; }
.view { width: 84px; }
.layer { width: 126px; }
.off, .off input { background: #ececec; color: #808080; }
.off .dd::after { border-top-color: #888; }
.magnet { width: 35px; gap: 5px; }
.coord { width: 48px; height: 20px; margin-left: 1px; padding-left: 4px; border: 1px solid #a0a0a0; background: #fff; }
.coord + .coord { margin-left: 2px; }

/* work area */
.work { flex: 1; display: flex; padding-right: 2px; background: #e3e3e3; }
.side {
  width: 26px;
  flex: none;
  display: flex;
  flex-direction: column;
  align-items: center;
  padding: 3px 1px 2px 0;
  background: linear-gradient(90deg, #fdfdfd 20%, #d4d4d4);
  border-left: 1px solid #ddd;
  border-right: 1px solid #a0a0a0;
}
.gripx { width: 15px; height: 2px; margin-bottom: 3px; background: repeating-linear-gradient(90deg, #a0a0a0 0 2px, transparent 2px 4px); }
.panels button { width: 17px; height: 17px; position: relative; left: 2px; }
.panels svg { width: 13px; height: 13px; }
.panels button::before { content: ""; position: absolute; left: -4px; top: 3px; width: 2px; height: 10px; background: repeating-linear-gradient(#a0a0a0 0 2px, transparent 2px 4px); }
.hsep { width: 16px; height: 9px; background: linear-gradient(#a0a0a0, #a0a0a0) 0 3px / 100% 1px no-repeat; }
.tools button { width: 22px; height: 22px; position: relative; }
.tools svg { width: 16px; height: 16px; }
.tools button::after { content: ""; position: absolute; right: 2px; bottom: 3px; border: 2px solid #777; border-left-color: transparent; border-top-color: transparent; }
.tools .nc::after { display: none; }
.sideover { width: 25px; height: 11px; margin-top: auto; justify-content: flex-end; background: linear-gradient(90deg, #aaa, #eee); }
.sideover::after { content: ""; border: 3px solid transparent; border-left: 4px solid #000; border-right: 0; }
.canvas { position: relative; flex: 1; min-width: 0; overflow: hidden; background: #fff; border-left: 1px solid #696969; border-bottom: 1px solid #e0e0e0; margin-left: 1px; }
.drawing { max-width: none; }
.tn { font: 11px "DejaVu Sans", sans-serif; }
.stamp { font: italic 8px "Liberation Sans Narrow", "Liberation Sans", sans-serif; }

.treepanel {
  position: absolute;
  left: 0;
  top: 71px;
  bottom: 0;
  width: 277px;
  display: flex;
  flex-direction: column;
  padding: 4px 2px 0 3px;
  background: #f4f4f4;
  border-right: 2px solid #808080;
  border-bottom: 1px solid #a0a0a0;
}
.treehead { display: flex; align-items: center; height: 18px; padding: 0 4px 0 2px; background: #bfcddb; }
.treehead h2 { flex: 1; font-weight: bold; }
.treehead svg, .libhead svg { width: 9px; height: 9px; }
.treetools { display: flex; align-items: center; height: 24px; padding-left: 7px; gap: 2px; background: linear-gradient(#fff, #e2e2e2); }
.treetools svg { width: 16px; height: 16px; }
.tree { flex: 1; padding: 3px 0 0 8px; background: #fff; border: 1px solid #a0a0a0; border-bottom-color: #000; box-shadow: inset 0 0 0 3px #eee; }
.tree li { display: flex; align-items: center; height: 20px; }
.ti { width: 14px; height: 14px; }
.tree span { margin-left: 9px; }
.tree .child { padding-left: 3px; }
.plus { width: 20px; height: 20px; }
.treetabs { display: flex; padding-left: 2px; height: 22px; background: linear-gradient(#fff, #e4e4e4); }
.treetabs button { height: 20px; padding: 0 6px; background: #fff; border: 1px solid #000; border-width: 0 1px 1px 0; }

/* property strip */
.props { display: flex; gap: 3px; padding: 8px 6px 7px 27px; }
.gripy { width: 2px; background: repeating-linear-gradient(#a0a0a0 0 2px, transparent 2px 4px); }
.propbox { flex: 1; }
.proptop { height: 35px; border: 1px solid #a0a0a0; border-bottom-color: #000; background: linear-gradient(#fff, #ebebeb); box-shadow: inset 0 0 0 3px #f0f0f0; }
.propbot { height: 22px; background: linear-gradient(#fdfdfd, #dedede); }

/* library manager */
.library { margin-left: 26px; }
.libhead { display: flex; align-items: center; gap: 8px; height: 21px; padding: 0 5px 0 4px; background: linear-gradient(#fff, #e0e0e0); }
.libhead h2 { flex: 1; }
.libbody { display: flex; gap: 3px; height: 155px; padding: 3px 3px 2px; border: 1px solid #a0a0a0; border-width: 1px 1px 0 1px; background: #f0f0f0; font-family: Roboto, "Noto Sans", sans-serif; }
.libtree { width: 304px; flex: none; display: flex; flex-direction: column; border: 1px solid #a0a0a0; background: #fff; overflow: hidden; padding: 1px; }
.libtree ul { flex: 1; padding: 0 0 0 5px; }
.libtree li { display: flex; align-items: center; height: 18px; white-space: nowrap; }
.li0 { width: 16px; height: 16px; margin-right: 5px; }
.libtree span { padding: 0 2px; }
.sub { padding-left: 8px; }
.join { width: 14px; height: 18px; }
.fold { width: 18px; height: 14px; margin-right: 4px; }
.sel { background: #f0f0f0; line-height: 18px; }
.hscroll { display: flex; align-items: center; height: 16px; background: #f0f0f0; }
.hscroll button { width: 18px; height: 16px; }
.sl::after, .sr::after { content: ""; border: 4px solid transparent; border-right-color: #333; border-left: 0; }
.sr::after { border: 4px solid transparent; border-left-color: #333; border-right: 0; }
.track { flex: 1; }
.thumb { width: 83%; height: 14px; display: flex; gap: 1px; align-items: center; justify-content: center; border: 1px solid #9a9a9a; border-radius: 2px; background: linear-gradient(#f4f4f4 50%, #dcdcdc 50%, #cfcfcf); }
.thumb i { width: 2px; height: 7px; background: #777; }
.liblist { flex: 1; display: grid; grid-auto-flow: column; grid-template-rows: repeat(7, 17px); grid-template-columns: 321px; justify-content: start; padding: 1px; border: 1px solid #a0a0a0; background: #fff; }
.liblist li { display: flex; align-items: flex-start; white-space: nowrap; }
.liblist i { flex: none; width: 20px; height: 15px; border: 1px solid #b8b8b8; border-width: 1px 0 0 1px; }
.liblist span { padding: 1px 2px 0; }
.liblist .cur i { border: 1px solid #7ab8f8; }
.liblist .cur span { background: #f0f0f0; }
.libtabs { display: flex; height: 24px; border-bottom: 1px solid #808080; background: linear-gradient(#fff, #e0e0e0); }
.tab { height: 22px; gap: 1px; padding: 0 6px; white-space: nowrap; border-top: 1px solid #000; }
.tab svg { width: 16px; height: 16px; }
.dim { color: #8a8a8a; }
.act { padding: 0 3px; border: 1px solid #000; border-width: 0 1px 1px 0; background: #f6f6f6; }
.rest { flex: 1; border-top: 1px solid #000; }

.status { display: flex; align-items: center; height: 19px; margin-top: 1px; padding: 2px 0 0 6px; background: #f0ecec; }
.status span { flex: 1; }
.status i { width: 87px; height: 17px; border-left: 1px solid #d0cccc; }

/* taskbar */
.taskbar {
  position: relative;
  display: flex;
  align-items: center;
  height: 41px;
  padding-left: 8px;
  overflow: hidden;
  color: #fff;
  border-top: 1px solid #17375e;
  box-shadow: inset 0 1px #8cc0e4;
  background: linear-gradient(90deg, #1f6d9c 0, #2b84b4 5%, #3a9bd0 20%, #3b9fd4 33%, #2c8aca 36%, #2878c0 55%, #1f66b4 72%, #1d5aa8 80%, #16457c 85%, #123a68 100%);
}
.taskbar::before { content: ""; position: absolute; left: 73%; top: 0; width: 14px; height: 100%; background: linear-gradient(90deg, transparent, #a4d0fa 30% 70%, transparent); transform: skewX(45deg); }
.orb { width: 38px; height: 38px; margin-right: 11px; }
.orb svg { width: 38px; height: 38px; }
.pin { width: 62px; height: 38px; }
.pin svg { width: 30px; height: 30px; }
.task { width: 59px; height: 38px; margin-left: 3px; border: 1px solid #1c4a74; border-radius: 3px; box-shadow: inset 0 0 0 1px #a8d4ec; background: linear-gradient(135deg, #8cc4e4, #3c8cbc); }
.cur.task { background: linear-gradient(160deg, #d4e8f4, #8cc0e0); }
.task svg { width: 32px; height: 32px; }
.tray { display: flex; align-items: center; gap: 8px; margin-left: auto; }
.tray svg { width: 16px; height: 16px; }
.tray .lang { margin: 0 3px 4px 0; }
.clock { width: 84px; display: flex; flex-direction: column; align-items: center; line-height: 17px; }
.peek { width: 14px; height: 38px; margin-right: 1px; border: 1px solid #7c98b4; background: linear-gradient(#5c7c9c, #16365c); }
```
